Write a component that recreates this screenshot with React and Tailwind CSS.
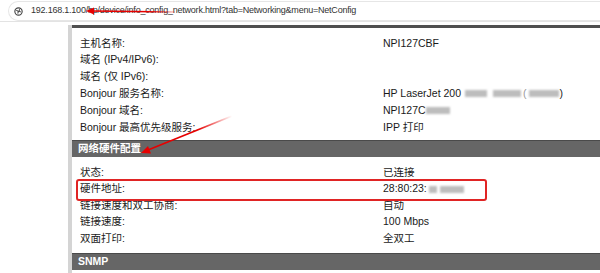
import React from "react";

const font = { fontFamily: '"Liberation Sans", "Noto Sans CJK SC", Arial, sans-serif' };

function Blur({ w, ml = 0 }) {
  return (
    <span
      className="inline-block h-[7px] bg-[#bdbdbd] blur-[1.2px] align-middle"
      style={{ width: w, marginLeft: ml }}
    />
  );
}

function Row({ label, children, h = "h-[16.8px]" }) {
  return (
    <div className={`flex items-center ${h}`}>
      <div className="w-[311px] pl-[8px] shrink-0">{label}</div>
      <div className="flex items-center">{children}</div>
    </div>
  );
}

export default function App() {
  return (
    <div
      className="relative w-[600px] h-[273px] overflow-hidden bg-white text-[10.5px] text-[#1a1a1a]"
      style={font}
    >
      {/* URL bar */}
      <div className="h-[22px] border-b border-[#e3e3e3] pt-[1px]">
        <div className="ml-[8px] h-[20px] rounded-l-full border border-r-0 border-[#e6e6e6] flex items-center pl-[5px] bg-white">
          <svg width="9" height="9" viewBox="0 0 16 16" className="mr-[8px]">
            <circle cx="8" cy="8" r="6.5" fill="none" stroke="#444" strokeWidth="2" />
            <path d="M4 5.5 L8 8 L6.5 11.5 M10 4 L9 7 L12 9" stroke="#444" strokeWidth="1.8" fill="none" />
          </svg>
          <span className="text-[9px] text-[#333] tracking-[-0.22px] whitespace-nowrap">
            192.168.1.100/hp/device/info_config_network.html?tab=Networking&amp;menu=NetConfig
          </span>
        </div>
      </div>

      <div className="flex h-[251px] pt-[3px]">
        <div className="w-[68px] shrink-0" />
        <div className="w-[4px] shrink-0 bg-[#d4d4d4]" />
        <div className="flex-1 flex flex-col">
          <div className="h-[3px] bg-[#4f4f4f]" />
          <div className="pt-[7px] pb-[4px]">
            <Row label="主机名称:">NPI127CBF</Row>
            <Row label="域名 (IPv4/IPv6):" />
            <Row label="域名 (仅 IPv6):" />
            <Row label="Bonjour 服务名称:">
              <span>HP LaserJet 200</span>
              <Blur w={22} ml={4} />
              <Blur w={28} ml={6} />
              <span className="ml-[2px] text-[#999]">(</span>
              <Blur w={30} ml={2} />
              <span className="ml-[1px]">)</span>
            </Row>
            <Row label="Bonjour 域名:">
              <span>NPI127C</span>
              <Blur w={24} ml={0} />
            </Row>
            <Row label="Bonjour 最高优先级服务:">IPP 打印</Row>
          </div>
          <div className="h-[17px] bg-[#666666] border-t border-[#4a4a4a] text-white font-bold flex items-center pl-[6px]">
            网络硬件配置
          </div>
          <div className="pt-[7.5px] pb-[6px]">
            <Row label="状态:" h="h-[16.5px]">已连接</Row>
            <Row label="硬件地址:" h="h-[16.5px]">
              <span>28:80:23:</span>
              <Blur w={8} ml={2} />
              <Blur w={24} ml={3} />
            </Row>
            <Row label="链接速度和双工协商:" h="h-[16.5px]">自动</Row>
            <Row label="链接速度:" h="h-[16.5px]">100 Mbps</Row>
            <Row label="双面打印:" h="h-[16.5px]">全双工</Row>
          </div>
          <div className="h-[17px] bg-[#666666] border-t border-[#4a4a4a] text-white font-bold flex items-center pl-[6px]">
            SNMP
          </div>
        </div>
      </div>

      {/* Red annotations */}
      <div className="absolute left-[76px] top-[179px] w-[411px] h-[22px] border-2 border-[#e02424] rounded-[3px]" />
      <svg className="absolute left-0 top-0" width="600" height="273" viewBox="0 0 600 273">
        <defs>
          <linearGradient id="g1" x1="85" y1="0" x2="175" y2="0" gradientUnits="userSpaceOnUse">
            <stop offset="0" stopColor="#e60000" />
            <stop offset="0.7" stopColor="#e60000" />
            <stop offset="1" stopColor="#e60000" stopOpacity="0.2" />
          </linearGradient>
          <linearGradient id="g2" x1="147" y1="151" x2="232" y2="116" gradientUnits="userSpaceOnUse">
            <stop offset="0" stopColor="#e60000" />
            <stop offset="0.6" stopColor="#e60000" />
            <stop offset="1" stopColor="#e60000" stopOpacity="0" />
          </linearGradient>
        </defs>
        <line x1="92" y1="11" x2="175" y2="12" stroke="url(#g1)" strokeWidth="1.6" />
        <polygon points="86,11 94,7.5 94,14.5" fill="#e60000" />
        <line x1="148" y1="150" x2="232" y2="116" stroke="url(#g2)" strokeWidth="1.8" />
        <polygon points="141,153 151,153.6 148,146" fill="#e60000" />
      </svg>
    </div>
  );
}
